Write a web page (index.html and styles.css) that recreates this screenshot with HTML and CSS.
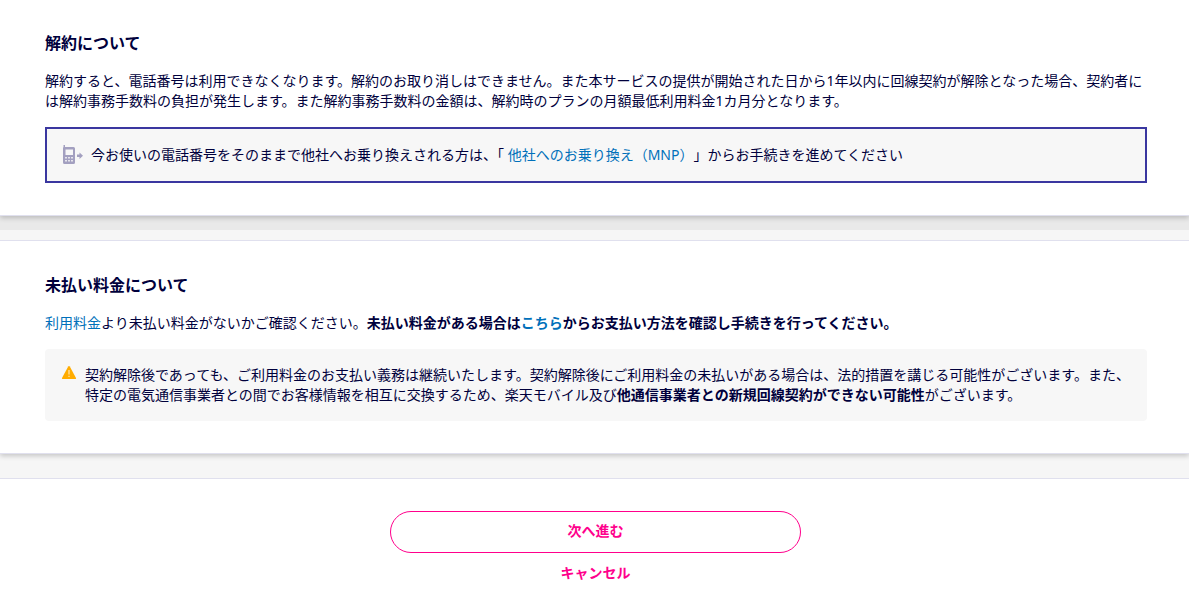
FILE: index.html
```html
<!DOCTYPE html>
<html lang="ja">
<head>
<meta charset="utf-8">
<meta name="viewport" content="width=device-width, initial-scale=1">
<title>解約について</title>
<link rel="stylesheet" href="styles.css">
</head>
<body>
<main class="page">
  <div class="intro">
    <section class="panel panel-first">
      <h2 class="panel-title">解約について</h2>
      <p class="panel-text">解約すると、電話番号は利用できなくなります。解約のお取り消しはできません。また本サービスの提供が開始された日から1年以内に回線契約が解除となった場合、契約者には解約事務手数料の負担が発生します。また解約事務手数料の金額は、解約時のプランの月額最低利用料金1カ月分となります。</p>
      <div class="notice">
        <svg class="notice-icon" viewBox="0 0 22 20" aria-hidden="true">
          <path fill="#a3a0c0" fill-rule="evenodd" d="M2.500 0h1.500v2H12.500q1.500 0 1.500 1.500v14q0 1.500-1.500 1.500H3.500q-1.500 0-1.500-1.500V3q0-.700.500-1zM4.500 4.500v5.500h7.500V4.500z"/>
          <path fill="#f7f7f7" fill-opacity=".8" d="M4 12h2v1.500H4zm3 0h2v1.500H7zm3 0h2v1.500h-2zM4 15h2v1.500H4zm3 0h2v1.500H7zm3 0h2v1.500h-2z"/>
          <path fill="#a3a0c0" d="M16 9.500h2.500V7.500l3.500 3.200-3.500 3.200V12H16z"/>
        </svg>
        <p class="notice-text">今お使いの電話番号をそのままで他社へお乗り換えされる方は、「 <a class="link link-full" href="#">他社へのお乗り換え（MNP）</a>」からお手続きを進めてください</p>
      </div>
    </section>
  </div>
  <section class="panel panel-payment">
    <h2 class="panel-title">未払い料金について</h2>
    <p class="panel-text"><a class="link" href="#">利用料金</a>より未払い料金がないかご確認ください。<strong>未払い料金がある場合は<a class="link" href="#">こちら</a>からお支払い方法を確認し手続きを行ってください。</strong></p>
    <div class="warning">
      <svg class="warning-icon" viewBox="0 0 16 16" aria-hidden="true">
        <path fill="#ffac00" d="M8 1q.500 0 .800.500l6.200 11.500q.400 1-.500 1H1.500q-.900 0-.500-1l6.200-11.500Q7.500 1 8 1z"/>
        <path fill="#fff" fill-opacity=".7" d="M7.400 5h1.200v4.500H7.400zM7.400 10.700h1.200v1.300H7.400z"/>
      </svg>
      <p class="warning-text">契約解除後であっても、ご利用料金のお支払い義務は継続いたします。契約解除後にご利用料金の未払いがある場合は、法的措置を講じる可能性がございます。また、特定の電気通信事業者との間でお客様情報を相互に交換するため、楽天モバイル及び<strong>他通信事業者との新規回線契約ができない可能性</strong>がございます。</p>
    </div>
  </section>
  <section class="actions">
    <button class="button button-outline" type="button">次へ進む</button>
    <button class="button button-text" type="button">キャンセル</button>
  </section>
</main>
</body>
</html>
```
FILE: styles.css
```css
* { box-sizing: border-box; }
body {
  margin: 0;
  background: #f6f6f6;
  color: #00003c;
  font: 14px/20px "Noto Sans", "Noto Sans CJK JP", sans-serif;
}
h2, p { margin: 0; }
.page { display: flex; flex-direction: column; min-height: 100vh; }
.intro { margin-bottom: 10px; padding-bottom: 14px; background: #e9e9e9; }
.panel {
  padding: 32px 42px 32px 45px;
  background: #fff;
  border: solid #e0e0ee;
  border-width: 1px 0;
  box-shadow: 0 2px 5px rgba(0, 0, 0, .2);
  clip-path: inset(0 0 -14px);
}
.panel-first { padding-top: 31px; border-top: 0; }
.panel-payment { margin-bottom: 24px; }
.panel-title { margin-bottom: 16px; font-size: 16px; line-height: 24px; }
.panel-text { margin-bottom: 16px; }
.link { color: #0070ba; text-decoration: none; }
.link-full { text-spacing-trim: space-all; }
.notice {
  display: flex;
  align-items: center;
  gap: 8px;
  padding: 16px 14px;
  background: #f7f7f7;
  border: 2px solid #3a37a0;
}
.notice-icon { flex: none; width: 22px; height: 20px; }
.warning {
  display: flex;
  gap: 8px;
  padding: 16px;
  background: #f7f7f7;
  border-radius: 4px;
}
.warning-icon { flex: none; width: 16px; height: 16px; }
.actions {
  display: flex;
  flex: 1;
  flex-direction: column;
  align-items: center;
  gap: 10px;
  padding: 32px 42px 24px 44px;
  background: #fff;
  border-top: 1px solid #e0e0ee;
}
.button {
  background: transparent;
  color: #ff008c;
  font: inherit;
  font-weight: 700;
  cursor: pointer;
}
.button-outline {
  width: 411px;
  max-width: 100%;
  padding: 9px 16px 11px;
  border: 1px solid #ff008c;
  border-radius: 24px;
}
.button-text { padding: 0; border: 0; }
```
